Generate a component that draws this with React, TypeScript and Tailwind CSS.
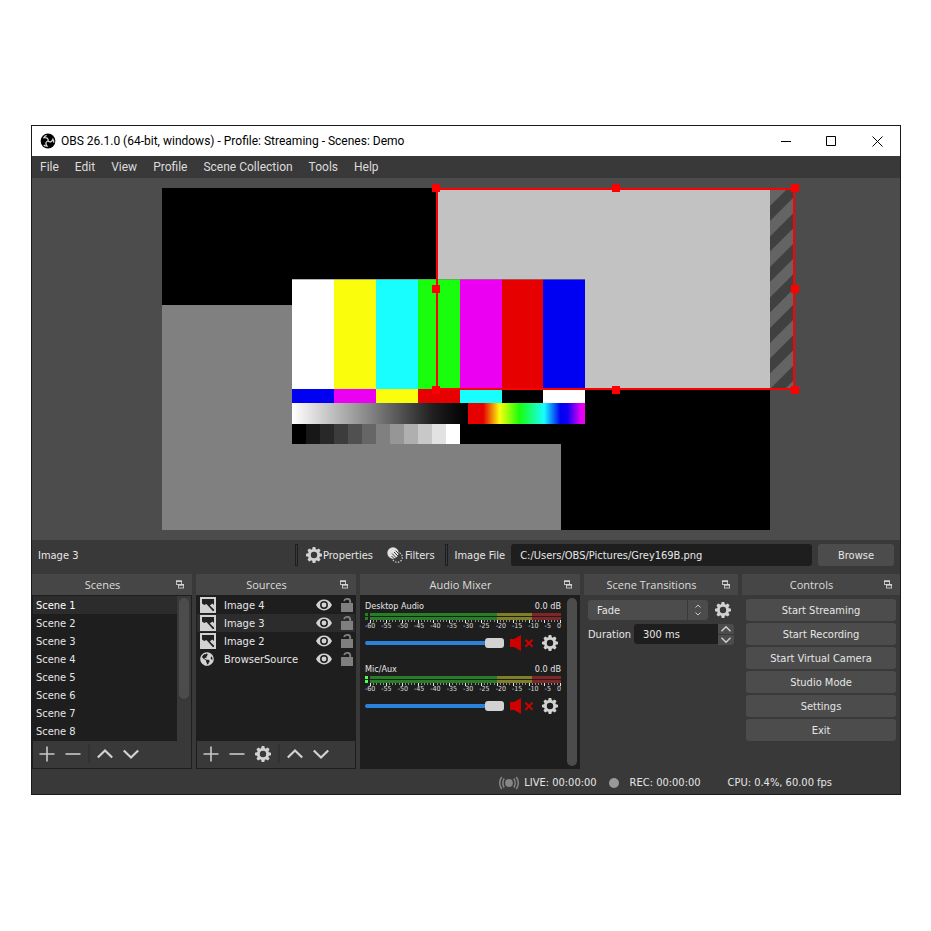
import type { ReactNode } from "react";
import { FaGlobeAmericas } from "react-icons/fa";

const MENU = ["File", "Edit", "View", "Profile", "Scene Collection", "Tools", "Help"];
const SCENES = [1, 2, 3, 4, 5, 6, 7, 8].map((n) => `Scene ${n}`);
const SOURCES = [
  { name: "Image 4", kind: "image" },
  { name: "Image 3", kind: "image", selected: true },
  { name: "Image 2", kind: "image" },
  { name: "BrowserSource", kind: "browser" },
];
const CONTROLS = ["Start Streaming", "Start Recording", "Start Virtual Camera", "Studio Mode", "Settings", "Exit"];
const DB_MARKS = [-60, -55, -50, -45, -40, -35, -30, -25, -20, -15, -10, -5, 0];

const BUTTON = "rounded-[3px] bg-[#4c4c4c] pt-[2px] text-center hover:bg-[#5a5a5a]";

/* ---------- icons ---------- */

function ObsLogo() {
  return (
    <svg viewBox="0 0 16 16" className="size-4" aria-hidden="true">
      <circle cx="8" cy="8" r="7.4" fill="#000" />
      <g fill="none" stroke="#d8d8d8" strokeWidth="1.3">
        {[0, 120, 240].map((a) => (
          <path key={a} d="M8 8C8.6 5.6 7 4.2 4 4.6C4.6 3.4 5.6 2.6 6.6 2.3" transform={`rotate(${a} 8 8)`} />
        ))}
      </g>
    </svg>
  );
}

function Gear() {
  return (
    <svg viewBox="0 0 16 16" className="size-4 shrink-0" fill="#d2d2d2" aria-hidden="true">
      <circle cx="8" cy="8" r="4.6" fill="none" stroke="#d2d2d2" strokeWidth="2.8" />
      {[0, 45, 90, 135, 180, 225, 270, 315].map((a) => (
        <path key={a} d="M6 3L6.7 0H9.3L10 3Z" transform={`rotate(${a} 8 8)`} />
      ))}
    </svg>
  );
}

function Plus() {
  return (
    <svg viewBox="0 0 16 16" className="size-4" stroke="#c8c8c8" strokeWidth="1.6" aria-hidden="true">
      <path d="M8 0.5V15.5M0.5 8H15.5" />
    </svg>
  );
}

function Minus() {
  return (
    <svg viewBox="0 0 16 16" className="size-4" stroke="#c8c8c8" strokeWidth="1.6" aria-hidden="true">
      <path d="M0.5 8H15.5" />
    </svg>
  );
}

function Chevron({ down = false, small = false }: { down?: boolean; small?: boolean }) {
  return (
    <svg
      viewBox="0 0 16 16"
      className={small ? "size-[10px]" : "size-4"}
      fill="none"
      stroke="#d2d2d2"
      strokeWidth="2.2"
      aria-hidden="true"
    >
      <path d={down ? "M0.8 4.5L8 11.5L15.2 4.5" : "M0.8 11.5L8 4.5L15.2 11.5"} />
    </svg>
  );
}

function Popout() {
  return (
    <svg viewBox="0 0 8 9" className="h-[9px] w-2" aria-hidden="true">
      <rect x="0.5" y="1" width="5" height="3.5" fill="none" stroke="#bdbdbd" />
      <rect x="0" y="0.5" width="6" height="1.5" fill="#d2d2d2" />
      <rect x="2.5" y="4.5" width="5" height="3.5" fill="#464646" stroke="#bdbdbd" />
      <rect x="2" y="4" width="6" height="1.7" fill="#d2d2d2" />
    </svg>
  );
}

function ImageIcon() {
  return (
    <svg viewBox="0 0 16 16" className="size-4" aria-hidden="true">
      <rect width="16" height="16" fill="#d2d2d2" />
      <path d="M2 2H14V8L12.3 6.4L9.8 8.6L14 12.4V14H12.8L6.4 7L4.2 8L2 6.5Z" fill="#222" />
    </svg>
  );
}

function Eye() {
  return (
    <svg viewBox="0 0 16 12" className="h-3 w-4" aria-hidden="true">
      <path d="M0 6C2 2.2 4.8 0.6 8 0.6S14 2.2 16 6C14 9.8 11.2 11.4 8 11.4S2 9.8 0 6Z" fill="#d2d2d2" />
      <circle cx="8" cy="6" r="3.2" fill="none" stroke="#1f1e1f" strokeWidth="1.5" />
    </svg>
  );
}

function Unlocked() {
  return (
    <svg viewBox="0 0 12 14" className="h-[14px] w-3" aria-hidden="true">
      <rect y="5" width="12" height="9" fill="#7f7f7f" />
      <path d="M3.2 3.2C3.4 1.6 4.6 0.9 6.2 0.9C8 0.9 9.2 1.9 9.2 3.6V5.5" fill="none" stroke="#7f7f7f" strokeWidth="1.9" />
    </svg>
  );
}

function FiltersIcon() {
  return (
    <svg viewBox="0 0 16 16" className="size-4" aria-hidden="true">
      <circle cx="10.3" cy="10.3" r="5" fill="none" stroke="#d2d2d2" strokeWidth="1.2" strokeDasharray="1.5 1.3" />
      <circle cx="6" cy="6" r="5.7" fill="#e2e2e2" />
      <path d="M5 6.5L10 11.5M7 5L12 10M4.5 9L8 12.5M8.6 3.6L12 7" stroke="#3a393a" strokeWidth="1" />
    </svg>
  );
}

function MutedSpeaker() {
  return (
    <svg viewBox="0 0 24 16" className="h-4 w-6" aria-hidden="true">
      <path d="M0 4H4L11 0V16L4 12H0Z" fill="#cf0000" />
      <path d="M15.5 4.8L22.5 11.8M22.5 4.8L15.5 11.8" stroke="#cf0000" strokeWidth="2" />
    </svg>
  );
}

function LiveIcon() {
  return (
    <svg viewBox="0 0 20 14" className="h-[14px] w-5" fill="none" stroke="#858585" strokeWidth="1.5" aria-hidden="true">
      <circle cx="10" cy="7" r="3.9" fill="#858585" stroke="none" />
      <path d="M5.2 2.5C3.4 5 3.4 9 5.2 11.5M14.8 2.5C16.6 5 16.6 9 14.8 11.5M2.8 1C0 4.4 0 9.6 2.8 13M17.2 1C20 4.4 20 9.6 17.2 13" />
    </svg>
  );
}

/* ---------- preview ---------- */

const TOP_BARS = ["#ffffff", "#fafe0c", "#18fefe", "#18fe0c", "#ec00f2", "#e60000", "#0000f2"];
const LOW_BARS = ["#0000f2", "#ec00f2", "#fafe0c", "#e60000", "#18fefe", "#000000", "#ffffff"];
const STEPS = ["#000000", "#171717", "#282828", "#3c3c3c", "#505050", "#666666", "#808080", "#969696", "#afafaf", "#c8c8c8", "#e2e2e2", "#ffffff"];
const BAR_EDGES = [130, 172, 214, 256, 298, 340, 381, 423];

function Preview() {
  return (
    <svg
      viewBox="0 0 608 342"
      className="size-full overflow-visible"
      shapeRendering="crispEdges"
      role="img"
      aria-label="Program preview"
    >
      <defs>
        <linearGradient id="greys">
          <stop offset="0" stopColor="#fff" />
          <stop offset="0.5" stopColor="#757575" />
          <stop offset="0.8" stopColor="#202020" />
          <stop offset="1" stopColor="#000" />
        </linearGradient>
        <linearGradient id="hues">
          <stop offset="0" stopColor="#e60000" />
          <stop offset="0.13" stopColor="#e60000" />
          <stop offset="0.27" stopColor="#fafe0c" />
          <stop offset="0.44" stopColor="#18fe0c" />
          <stop offset="0.65" stopColor="#18fefe" />
          <stop offset="0.79" stopColor="#0000f2" />
          <stop offset="0.85" stopColor="#1000f2" />
          <stop offset="0.97" stopColor="#ec00f2" />
        </linearGradient>
        <clipPath id="overflow">
          <rect x="608" y="2" width="24" height="198" />
        </clipPath>
      </defs>
      <rect width="608" height="342" fill="#000" />
      <rect y="117" width="399" height="225" fill="#808080" />
      <rect x="275" y="1" width="333" height="200" fill="#c2c2c2" />

      <rect x="608" y="2" width="24" height="198" fill="#646464" />
      <g clipPath="url(#overflow)" fill="#404040" shapeRendering="auto">
        {[0, 1, 2, 3, 4, 5, 6].map((k) => {
          const y = 18 + k * 30.5;
          return <path key={k} d={`M608 ${y}L632 ${y - 24}V${y - 9}L608 ${y + 15}Z`} />;
        })}
      </g>

      <rect x="130" y="91" width="293" height="165" fill="#000" />
      {TOP_BARS.map((c, i) => (
        <rect key={c} x={BAR_EDGES[i]} y="91" width={BAR_EDGES[i + 1] - BAR_EDGES[i]} height="110" fill={c} />
      ))}
      {LOW_BARS.map((c, i) => (
        <rect key={c} x={BAR_EDGES[i]} y="201" width={BAR_EDGES[i + 1] - BAR_EDGES[i]} height="14" fill={c} />
      ))}
      <rect x="130" y="91" width="293" height="1" fill="#808080" opacity="0.6" />
      <rect x="130" y="215" width="175" height="21" fill="url(#greys)" />
      <rect x="306" y="215" width="117" height="21" fill="url(#hues)" />
      {STEPS.map((c, i) => (
        <rect key={c} x={130 + i * 14} y="236" width="14" height="20" fill={c} />
      ))}

      <rect x="275" y="1" width="357" height="200" fill="none" stroke="#f00" strokeWidth="2" />
      {[
        [274, 0],
        [454, 0],
        [633, 0],
        [274, 101],
        [633, 101],
        [274, 202],
        [454, 202],
        [633, 202],
      ].map(([x, y]) => (
        <rect key={`${x}-${y}`} x={x - 4} y={y - 4} width="8" height="8" fill="#f00" />
      ))}
    </svg>
  );
}

/* ---------- docks ---------- */

function Dock({ title, children }: { title: string; children: ReactNode }) {
  return (
    <section className="flex min-w-0 flex-col" aria-label={title}>
      <header className="flex h-[21px] items-center bg-[#464646] pr-2">
        <h2 className="flex-1 text-center font-['Open_Sans',sans-serif] text-[11px] text-[#dcdcdc]">{title}</h2>
        <button aria-label={`Undock ${title}`} className="ml-[3px]">
          <Popout />
        </button>
      </header>
      {children}
    </section>
  );
}

function ToolButton({ label, children }: { label: string; children: ReactNode }) {
  return (
    <button aria-label={label} className="flex w-[26px] items-center justify-center">
      {children}
    </button>
  );
}

function Toolbar({ gear = false }: { gear?: boolean }) {
  return (
    <div className="flex h-[27px] bg-[#3a393a] pb-[2px] pl-px">
      <ToolButton label="Add">
        <Plus />
      </ToolButton>
      <ToolButton label="Remove">
        <Minus />
      </ToolButton>
      {gear && (
        <ToolButton label="Properties">
          <Gear />
        </ToolButton>
      )}
      <div className="mx-[2px] my-[3px] w-[2px] bg-[#333233]" />
      <ToolButton label="Move up">
        <Chevron />
      </ToolButton>
      <ToolButton label="Move down">
        <Chevron down />
      </ToolButton>
    </div>
  );
}

function Meter({ lit }: { lit: boolean }) {
  return (
    <div className="flex flex-col gap-px">
      {[0, 1].map((n) => (
        <div key={n} className="flex h-[3px] gap-[2px]">
          <div className={lit ? "w-[3px] bg-[#4cff4c]" : "w-[3px] bg-[#267f26]"} />
          <div className="grid flex-1 grid-cols-[127fr_35fr_29fr]">
            <div className="bg-[#267f26]" />
            <div className="bg-[#7f7f26]" />
            <div className="bg-[#7f2626]" />
          </div>
        </div>
      ))}
    </div>
  );
}

function Channel({ name, lit = false }: { name: string; lit?: boolean }) {
  return (
    <div className="h-[63px] pt-1">
      <div className="flex h-[14px] items-center justify-between text-[9px] text-[#e6e6e6]">
        <span>{name}</span>
        <span>0.0 dB</span>
      </div>
      <Meter lit={lit} />
      <svg viewBox="0 0 196 4" preserveAspectRatio="none" className="h-1 w-full" shapeRendering="crispEdges" aria-hidden="true">
        {Array.from({ length: 61 }, (_, i) => (
          <rect
            key={i}
            x={Math.round(5 + i * 3.17)}
            width="1"
            height={i % 5 === 0 ? 3 : 2}
            fill={i % 5 === 0 ? "#e6e6e6" : "#8c8c8c"}
          />
        ))}
      </svg>
      <div className="flex h-[5px] items-center justify-between text-[7px] leading-none text-[#dcdcdc]">
        {DB_MARKS.map((m) => (
          <span key={m}>{m}</span>
        ))}
      </div>
      <div className="mt-[6px] flex items-center">
        <input
          type="range"
          defaultValue="100"
          aria-label={`${name} volume`}
          className="h-[10px] w-[139px] min-w-0 appearance-none bg-transparent [&::-webkit-slider-runnable-track]:h-1 [&::-webkit-slider-runnable-track]:rounded-full [&::-webkit-slider-runnable-track]:bg-[#2a82da] [&::-webkit-slider-thumb]:-mt-[3px] [&::-webkit-slider-thumb]:h-[10px] [&::-webkit-slider-thumb]:w-[19px] [&::-webkit-slider-thumb]:appearance-none [&::-webkit-slider-thumb]:rounded-[3px] [&::-webkit-slider-thumb]:bg-[#d2d2d2]"
        />
        <button aria-label={`Unmute ${name}`} className="ml-[6px]">
          <MutedSpeaker />
        </button>
        <button aria-label={`${name} settings`} className="ml-auto pr-[3px]">
          <Gear />
        </button>
      </div>
    </div>
  );
}

/* ---------- window ---------- */

function WindowButton({ label, d }: { label: string; d: string }) {
  return (
    <button aria-label={label} className="flex h-full w-[46px] items-center justify-center">
      <svg viewBox="0 0 11 11" className="size-[11px]" fill="none" stroke="#000" aria-hidden="true">
        <path d={d} />
      </svg>
    </button>
  );
}

export default function App() {
  return (
    <div className="min-h-screen bg-white pt-[125px] pr-[30px] pb-8 pl-[31px] font-['DejaVu_Sans_Condensed','DejaVu_Sans',sans-serif] text-[11px] leading-4 text-[#e6e6e6]">
      <main className="border border-[#1a1a1e] bg-[#3a393a]">
        <header className="flex h-[30px] items-center bg-white pl-2 font-[Roboto,sans-serif] text-[12px] text-black">
          <ObsLogo />
          <h1 className="ml-[5px] flex-1">OBS 26.1.0 (64-bit, windows) - Profile: Streaming - Scenes: Demo</h1>
          <WindowButton label="Minimize" d="M1 5.5H11" />
          <WindowButton label="Maximize" d="M0.5 0.5H9.5V9.5H0.5Z" />
          <WindowButton label="Close" d="M0.5 0.5L10.5 10.5M10.5 0.5L0.5 10.5" />
        </header>

        <nav className="flex h-[22px] items-center gap-4 pl-2 font-[Roboto,sans-serif] text-[12px] text-[#dcdcdc]">
          {MENU.map((m) => (
            <button key={m}>{m}</button>
          ))}
        </nav>

        <div className="h-[362px] bg-[#4c4c4c] p-[10px]">
          <Preview />
        </div>

        <div className="flex h-[34px] items-start px-[6px] pt-1">
          <div className="flex h-[22px] w-full items-center">
            <span className="w-[257px] pt-[2px]">Image 3</span>
            <div className="h-[22px] w-[3px] border border-[#1f1e1f]" />
            <button className="ml-2 flex items-center gap-px">
              <Gear />
              <span className="pt-[2px]">Properties</span>
            </button>
            <button className="ml-[14px] flex items-center gap-[2px]">
              <FiltersIcon />
              <span className="pt-[2px]">Filters</span>
            </button>
            <div className="ml-[10px] h-[22px] w-[3px] border border-[#1f1e1f]" />
            <label htmlFor="file" className="ml-[7px] pt-[2px]">
              Image File
            </label>
            <input
              id="file"
              defaultValue="C:/Users/OBS/Pictures/Grey169B.png"
              className="ml-[6px] h-[22px] min-w-0 flex-1 rounded-[3px] bg-[#1f1e1f] px-[9px] pt-px"
            />
            <button className={`${BUTTON} ml-[6px] h-[22px] w-[76px]`}>Browse</button>
          </div>
        </div>

        <div className="grid grid-cols-[160fr_160fr_220fr_154fr_158fr] gap-1">
          <Dock title="Scenes">
            <div className="border border-[#1f1e1f]">
              <div className="flex h-[145px] overflow-hidden bg-[#3a393a]">
                <ul className="flex-1 bg-[#1f1e1f]">
                  {SCENES.map((s, i) => (
                    <li key={s}>
                      <button
                        className={
                          i === 0
                            ? "block h-[18px] w-full bg-[#2d2c2d] pt-[2px] pl-[3px] text-left text-white"
                            : "block h-[18px] w-full pt-[2px] pl-[3px] text-left"
                        }
                      >
                        {s}
                      </button>
                    </li>
                  ))}
                </ul>
                <div className="w-[14px] px-[2px] pt-[2px]">
                  <div className="h-[101px] rounded-full bg-[#4c4c4c]" />
                </div>
              </div>
              <Toolbar />
            </div>
          </Dock>

          <Dock title="Sources">
            <div className="border border-[#1f1e1f]">
              <ul className="h-[145px] bg-[#1f1e1f]">
                {SOURCES.map((s) => (
                  <li
                    key={s.name}
                    className={
                      s.selected
                        ? "flex h-[18px] items-center bg-[#2d2c2d] pr-[2px] pl-[3px]"
                        : "flex h-[18px] items-center pr-[2px] pl-[3px]"
                    }
                  >
                    {s.kind === "image" ? (
                      <ImageIcon />
                    ) : (
                      <span className="flex w-4">
                        <FaGlobeAmericas className="size-[14px] text-[#d2d2d2]" />
                      </span>
                    )}
                    <span className="ml-2 flex-1 pt-[2px]">{s.name}</span>
                    <button aria-label={`Hide ${s.name}`}>
                      <Eye />
                    </button>
                    <button aria-label={`Lock ${s.name}`} className="ml-[9px]">
                      <Unlocked />
                    </button>
                  </li>
                ))}
              </ul>
              <Toolbar gear />
            </div>
          </Dock>

          <Dock title="Audio Mixer">
            <div className="flex flex-1 bg-[#1f1e1f] pr-[3px] pl-[5px]">
              <div className="min-w-0 flex-1">
                <Channel name="Desktop Audio" />
                <Channel name="Mic/Aux" lit />
              </div>
              <div className="ml-[6px] py-[3px]">
                <div className="h-full w-[10px] rounded-full bg-[#4c4c4c]" />
              </div>
            </div>
          </Dock>

          <Dock title="Scene Transitions">
            <div className="flex flex-col gap-1 p-1 pt-[5px]">
              <div className="flex items-center">
                <div className="relative w-[120px]">
                  <select aria-label="Transition" className="h-5 w-full appearance-none rounded-[3px] bg-[#4c4c4c] px-[9px] pt-px">
                    <option>Fade</option>
                  </select>
                  <div className="pointer-events-none absolute inset-y-0 right-0 flex w-[21px] flex-col items-center justify-center border-l border-[#3a393a]">
                    <svg viewBox="0 0 6 12" className="h-3 w-[6px]" fill="none" stroke="#c8c8c8" aria-hidden="true">
                      <path d="M0.5 3.5L3 1L5.5 3.5M0.5 8.5L3 11L5.5 8.5" />
                    </svg>
                  </div>
                </div>
                <button aria-label="Transition properties" className="ml-[7px]">
                  <Gear />
                </button>
              </div>
              <div className="flex h-5 items-center pr-0">
                <label htmlFor="duration" className="w-[46px] pt-[2px]">
                  Duration
                </label>
                <input id="duration" defaultValue="300 ms" className="h-5 min-w-0 flex-1 rounded-l-[3px] bg-[#1f1e1f] px-[9px] pt-px" />
                <div className="flex h-5 w-4 flex-col gap-px">
                  <button aria-label="Increase" className="flex flex-1 items-center justify-center rounded-tr-[3px] bg-[#4c4c4c]">
                    <Chevron small />
                  </button>
                  <button aria-label="Decrease" className="flex flex-1 items-center justify-center rounded-br-[3px] bg-[#4c4c4c]">
                    <Chevron small down />
                  </button>
                </div>
              </div>
            </div>
          </Dock>

          <Dock title="Controls">
            <div className="flex flex-col gap-[2px] p-1">
              {CONTROLS.map((c) => (
                <button key={c} className={`${BUTTON} h-[22px]`}>
                  {c}
                </button>
              ))}
            </div>
          </Dock>
        </div>

        <footer className="flex h-[25px] items-center justify-end pt-[2px] pr-[68px]">
          <LiveIcon />
          <span className="ml-[5px]">LIVE: 00:00:00</span>
          <span className="ml-3 size-[10px] rounded-full bg-[#999]" />
          <span className="ml-[11px]">REC: 00:00:00</span>
          <span className="ml-[27px]">CPU: 0.4%, 60.00 fps</span>
        </footer>
      </main>
    </div>
  );
}
